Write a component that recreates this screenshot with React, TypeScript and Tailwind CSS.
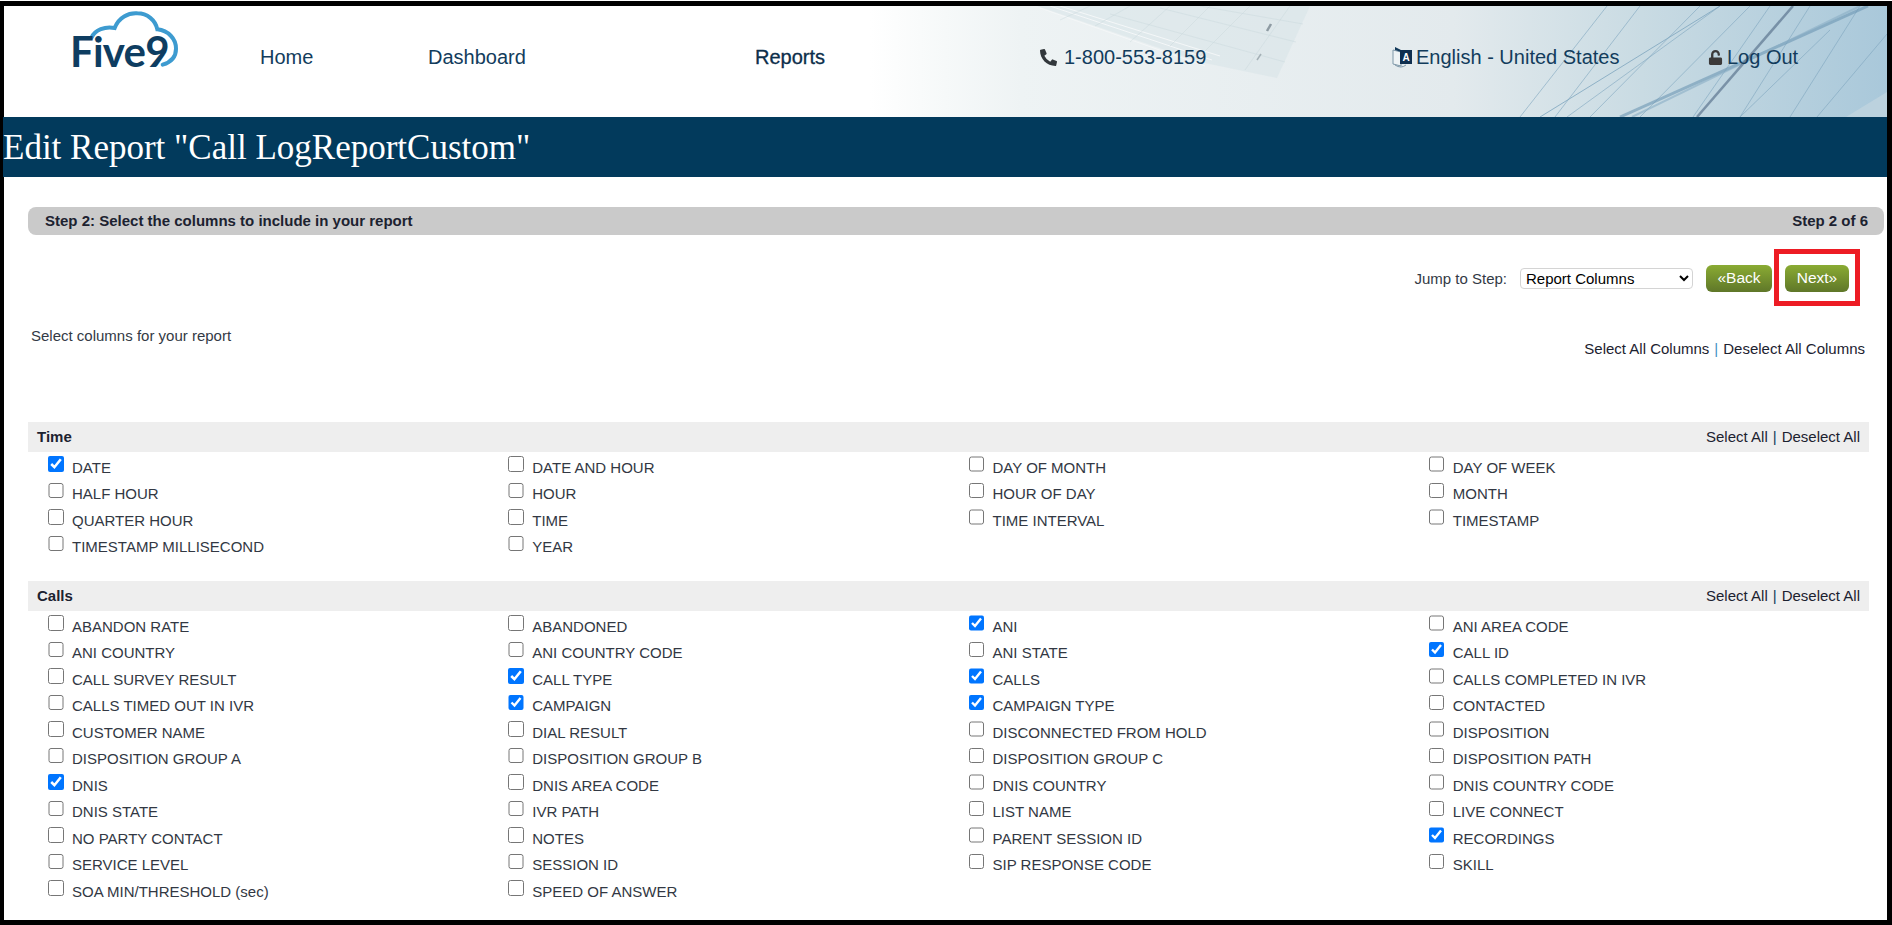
import { FaPhoneAlt, FaUnlock } from 'react-icons/fa'

type Column = [string, boolean?]

const timeColumns: Column[] = [
  ['DATE', true], ['DATE AND HOUR'], ['DAY OF MONTH'], ['DAY OF WEEK'],
  ['HALF HOUR'], ['HOUR'], ['HOUR OF DAY'], ['MONTH'],
  ['QUARTER HOUR'], ['TIME'], ['TIME INTERVAL'], ['TIMESTAMP'],
  ['TIMESTAMP MILLISECOND'], ['YEAR'],
]

const callColumns: Column[] = [
  ['ABANDON RATE'], ['ABANDONED'], ['ANI', true], ['ANI AREA CODE'],
  ['ANI COUNTRY'], ['ANI COUNTRY CODE'], ['ANI STATE'], ['CALL ID', true],
  ['CALL SURVEY RESULT'], ['CALL TYPE', true], ['CALLS', true], ['CALLS COMPLETED IN IVR'],
  ['CALLS TIMED OUT IN IVR'], ['CAMPAIGN', true], ['CAMPAIGN TYPE', true], ['CONTACTED'],
  ['CUSTOMER NAME'], ['DIAL RESULT'], ['DISCONNECTED FROM HOLD'], ['DISPOSITION'],
  ['DISPOSITION GROUP A'], ['DISPOSITION GROUP B'], ['DISPOSITION GROUP C'], ['DISPOSITION PATH'],
  ['DNIS', true], ['DNIS AREA CODE'], ['DNIS COUNTRY'], ['DNIS COUNTRY CODE'],
  ['DNIS STATE'], ['IVR PATH'], ['LIST NAME'], ['LIVE CONNECT'],
  ['NO PARTY CONTACT'], ['NOTES'], ['PARENT SESSION ID'], ['RECORDINGS', true],
  ['SERVICE LEVEL'], ['SESSION ID'], ['SIP RESPONSE CODE'], ['SKILL'],
  ['SOA MIN/THRESHOLD (sec)'], ['SPEED OF ANSWER'],
]

function HeaderArt() {
  const thin = [
    [1607, 6, 1520, 117], [1640, 6, 1555, 117], [1720, 6, 1567, 117], [1700, 6, 1590, 117],
    [1770, 6, 1693, 117], [1810, 6, 1740, 117], [1830, 30, 1740, 117], [1887, 34, 1817, 117],
    [1750, 6, 1640, 117], [1860, 6, 1790, 117],
  ]
  return (
    <svg className="absolute inset-0 w-full h-full" viewBox="4 6 1883 111" preserveAspectRatio="none">
      {/* building */}
      <polygon points="1037,6 1310,6 1277,78 1200,62" fill="#d7e3e8" opacity="0.55" />
      <path d="M1040 8 L1205 66 M1050 6 L1212 60 M1060 6 L1220 56" stroke="#f4f7f8" strokeWidth="1" />
      <path d="M1090 6 L1060 20 M1130 6 L1095 26 M1170 6 L1130 42 M1210 6 L1170 46 M1250 6 L1200 56 M1290 6 L1245 70" stroke="#c8d6dc" strokeWidth="0.6" opacity="0.7" />
      <path d="M1110 14 L1285 62 M1160 8 L1296 42 M1200 6 L1303 24" stroke="#c8d6dc" strokeWidth="0.6" opacity="0.7" />
      <path d="M1271 24 L1267 31" stroke="#8e9ba3" strokeWidth="2.5" />
      <path d="M1261 54 L1257 60" stroke="#a4b0b6" strokeWidth="1.5" />
      {/* glass lines */}
      {thin.map(([x1, y1, x2, y2]) => (
        <line key={`${x1}-${x2}`} x1={x1} y1={y1} x2={x2} y2={y2} stroke="#7fa6bf" strokeWidth="0.8" opacity="0.75" />
      ))}
      <line x1="1868" y1="6" x2="1620" y2="117" stroke="#6d97b4" strokeWidth="3" opacity="0.6" />
      <line x1="1860" y1="6" x2="1632" y2="117" stroke="#8bafc6" strokeWidth="2" opacity="0.6" />
      <line x1="1793" y1="6" x2="1697" y2="117" stroke="#566f8a" strokeWidth="2.5" opacity="0.65" />
      <line x1="1720" y1="6" x2="1540" y2="117" stroke="#7fa6bf" strokeWidth="1" opacity="0.8" />
      <polygon points="1887,92 1887,117 1846,117" fill="#c3d6e0" opacity="0.7" />
    </svg>
  )
}

function LanguageIcon() {
  return (
    <svg width="21" height="22" viewBox="0 0 21 22" className="shrink-0 mr-[3px]">
      <path d="M1 4 L9 6 V20 L1 18 Z" fill="#eef3f5" stroke="#7f98a9" strokeWidth="1" />
      <path d="M3 1 L9 4 V6 L3 4 Z" fill="#12395a" />
      <rect x="8" y="4" width="12" height="14" fill="#0f2f4f" />
      <text x="14" y="15" textAnchor="middle" fontSize="10" fontWeight="700" fill="#fff" fontFamily="'Liberation Sans', sans-serif">A</text>
      <path d="M3 19 Q9 23 14 19" fill="none" stroke="#7f98a9" strokeWidth="1" />
    </svg>
  )
}

function Logo() {
  return (
    <div className="relative w-[256px] h-full shrink-0">
      <svg className="absolute left-[36px] top-0 w-[180px] h-[90px]" viewBox="0 18 540 270">
        <path
          d="M155 112 C165 90 195 78 224 84 C236 52 265 38 292 40 C322 40 346 60 352 88 C385 92 408 116 408 146 C408 172 394 186 368 194"
          fill="none"
          stroke="#3d9bd0"
          strokeWidth="12"
          strokeLinecap="round"
        />
      </svg>
      <span className="absolute left-[66px] top-5 font-['Lato',sans-serif] font-bold text-[42px] leading-[50px] tracking-[-0.8px] text-[#0e3d61]">
        Five9
      </span>
    </div>
  )
}

function Section({ title, items }: { title: string; items: Column[] }) {
  return (
    <div className="w-[1841px] ml-6">
      <div className="h-[30px] bg-[#eeeeee] flex items-center justify-between pl-[9px] pr-[9px] text-[15px] text-[#1c2230]">
        <span className="font-bold">{title}</span>
        <span className="flex gap-[5px]">
          <span>Select All</span>
          <span className="text-[#0e3a5a]">|</span>
          <span>Deselect All</span>
        </span>
      </div>
      <div className="grid grid-cols-4 auto-rows-[26.5px] pt-px">
        {items.map(([label, checked]) => (
          <label key={label} className="flex items-center pl-[20px] gap-[8.5px] text-[15px] text-[#323843]">
            <input type="checkbox" defaultChecked={!!checked} className="w-[15.5px] h-[15.5px] m-0 mb-[5px] shrink-0" />
            <span className="mt-[3px]">{label}</span>
          </label>
        ))}
      </div>
    </div>
  )
}

export default function App() {
  return (
    <div className="h-[925px] w-[1892px] pt-px bg-white overflow-hidden font-['Liberation_Sans',Arial,sans-serif]">
      <div className="h-[924px] border-black border-t-[5px] border-l-4 border-r-[5px] border-b-[5px] bg-white">
        {/* Header */}
        <header className="relative h-[111px] flex bg-[linear-gradient(90deg,#ffffff_46%,#f6f9f9_50%,#eef3f4_54%,#e3eaed_77%,#c9dbe3_87%,#a9c8da_100%)]">
          <HeaderArt />
          <Logo />
          <nav className="relative flex items-start pt-[39px] text-[20px] leading-[24px] text-[#123c5c]">
            <a className="w-[168px]">Home</a>
            <a className="w-[327px]">Dashboard</a>
            <a className="w-[285px] text-[#0c2e4a] [-webkit-text-stroke:0.3px_#0c2e4a]">Reports</a>
            <a className="w-[352px] flex items-center">
              <FaPhoneAlt className="text-[#33383c] mr-[7px]" size={17} />
              1-800-553-8159
            </a>
            <a className="w-[316px] flex items-center">
              <LanguageIcon />
              English - United States
            </a>
            <a className="flex items-center">
              <FaUnlock className="text-[#3b3a3a] mr-[4px]" size={15} />
              Log Out
            </a>
          </nav>
        </header>

        {/* Title */}
        <div className="h-[60px] bg-[#023a5c] flex items-center pt-[3px] text-white font-['Liberation_Serif',serif] text-[35px] -ml-px">
          Edit Report "Call LogReportCustom"
        </div>

        {/* Step bar */}
        <div className="mt-[30px] ml-6 w-[1856px] h-[28px] rounded-lg bg-[#cacaca] flex items-center justify-between pl-[17px] pr-4 text-[15px] font-bold text-[#1c2230]">
          <span>Step 2: Select the columns to include in your report</span>
          <span>Step 2 of 6</span>
        </div>

        {/* Jump to step */}
        <div className="mt-[14px] h-[57px] flex items-center justify-end pr-[27px] pt-px text-[15px]">
          <span className="text-[#333a45] mt-[2px]">Jump to Step:</span>
          <select className="ml-[13px] mt-px w-[173px] h-[21px] rounded border border-[#d4d4d4] bg-white text-[15px] text-black pl-px" defaultValue="Report Columns">
            <option>Report Columns</option>
          </select>
          <button className="ml-[13px] mt-px w-[66px] h-[27px] pb-[2px] rounded-md bg-[linear-gradient(180deg,#8aab33,#5f7729)] text-white text-[15.5px]">«Back</button>
          <div className="ml-[2px] w-[86px] h-[57px] border-[5px] border-[#ed1c24] flex items-start pl-[6px] pt-[11px] -mt-px">
            <button className="w-[64px] h-[27px] pb-[2px] rounded-md bg-[linear-gradient(180deg,#8aab33,#5f7729)] text-white text-[15.5px]">Next»</button>
          </div>
        </div>

        {/* Select columns */}
        <div className="h-[116px] flex items-start justify-between pl-[27px] pr-[22px] text-[15px] leading-[20px]">
          <span className="mt-5 text-[#333a45]">Select columns for your report</span>
          <span className="mt-[33px] flex gap-[5px] text-[#1c2230]">
            <span>Select All Columns</span>
            <span className="text-[#3f8fc4]">|</span>
            <span>Deselect All Columns</span>
          </span>
        </div>

        <Section title="Time" items={timeColumns} />
        <div className="h-[22px]" />
        <Section title="Calls" items={callColumns} />
      </div>
    </div>
  )
}
